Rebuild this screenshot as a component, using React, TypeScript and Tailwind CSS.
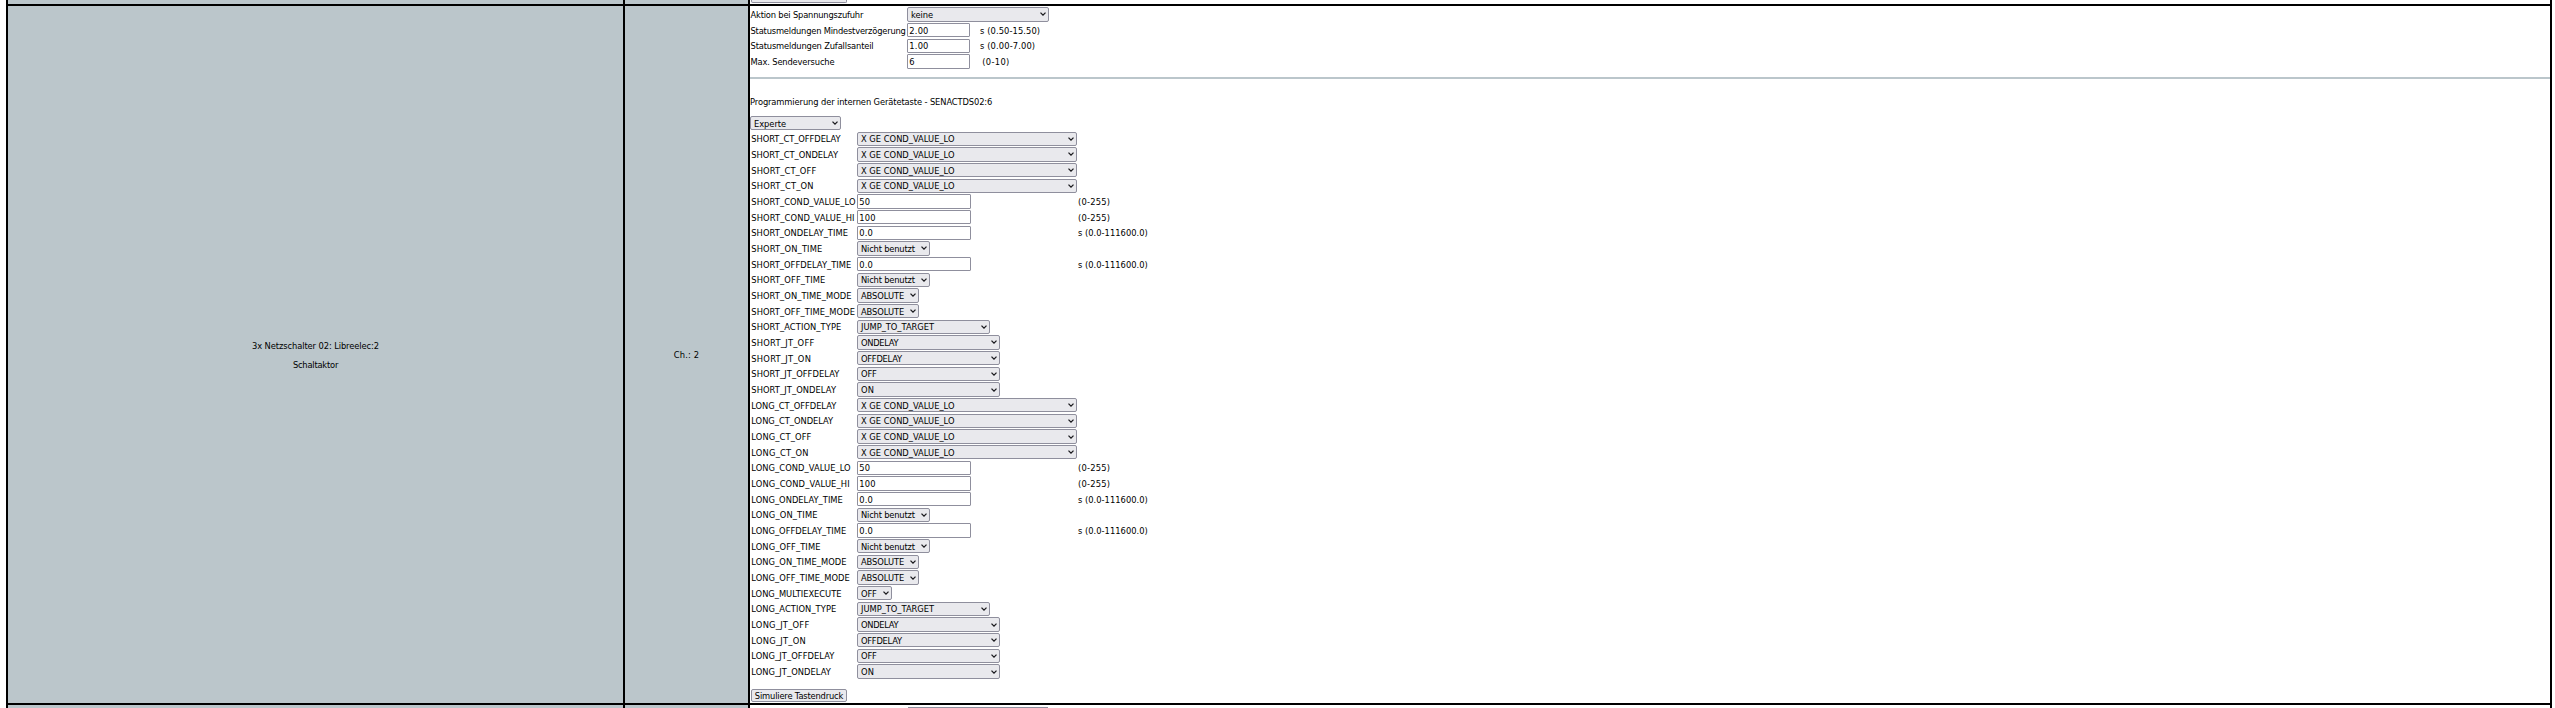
import type { ReactNode } from 'react';

type Field = {
  label: string;
  track: string;
  kind: 'select' | 'input';
  value: string;
  range?: string;
};

const COND = 'X GE COND_VALUE_LO';

const FIELDS: Field[] = [
  { label: 'SHORT_CT_OFFDELAY', track: 'tracking-[-0.063px]', kind: 'select', value: COND },
  { label: 'SHORT_CT_ONDELAY', track: 'tracking-[-0.024px]', kind: 'select', value: COND },
  { label: 'SHORT_CT_OFF', track: 'tracking-[0.108px]', kind: 'select', value: COND },
  { label: 'SHORT_CT_ON', track: 'tracking-[0.189px]', kind: 'select', value: COND },
  { label: 'SHORT_COND_VALUE_LO', track: 'tracking-[0.051px]', kind: 'input', value: '50', range: '(0-255)' },
  { label: 'SHORT_COND_VALUE_HI', track: 'tracking-[0.122px]', kind: 'input', value: '100', range: '(0-255)' },
  { label: 'SHORT_ONDELAY_TIME', track: 'tracking-[0.032px]', kind: 'input', value: '0.0', range: 's (0.0-111600.0)' },
  { label: 'SHORT_ON_TIME', track: 'tracking-[0.125px]', kind: 'select', value: 'Nicht benutzt' },
  { label: 'SHORT_OFFDELAY_TIME', track: 'tracking-[0.027px]', kind: 'input', value: '0.0', range: 's (0.0-111600.0)' },
  { label: 'SHORT_OFF_TIME', track: 'tracking-[0.088px]', kind: 'select', value: 'Nicht benutzt' },
  { label: 'SHORT_ON_TIME_MODE', track: 'tracking-[0.071px]', kind: 'select', value: 'ABSOLUTE' },
  { label: 'SHORT_OFF_TIME_MODE', track: 'tracking-[0.069px]', kind: 'select', value: 'ABSOLUTE' },
  { label: 'SHORT_ACTION_TYPE', track: 'tracking-[0.069px]', kind: 'select', value: 'JUMP_TO_TARGET' },
  { label: 'SHORT_JT_OFF', track: 'tracking-[0.231px]', kind: 'select', value: 'ONDELAY' },
  { label: 'SHORT_JT_ON', track: 'tracking-[0.256px]', kind: 'select', value: 'OFFDELAY' },
  { label: 'SHORT_JT_OFFDELAY', track: 'tracking-[0.066px]', kind: 'select', value: 'OFF' },
  { label: 'SHORT_JT_ONDELAY', track: 'tracking-[0.067px]', kind: 'select', value: 'ON' },
  { label: 'LONG_CT_OFFDELAY', track: 'tracking-[-0.044px]', kind: 'select', value: COND },
  { label: 'LONG_CT_ONDELAY', track: 'tracking-[-0.024px]', kind: 'select', value: COND },
  { label: 'LONG_CT_OFF', track: 'tracking-[0.108px]', kind: 'select', value: COND },
  { label: 'LONG_CT_ON', track: 'tracking-[0.189px]', kind: 'select', value: COND },
  { label: 'LONG_COND_VALUE_LO', track: 'tracking-[0.056px]', kind: 'input', value: '50', range: '(0-255)' },
  { label: 'LONG_COND_VALUE_HI', track: 'tracking-[0.122px]', kind: 'input', value: '100', range: '(0-255)' },
  { label: 'LONG_ONDELAY_TIME', track: 'tracking-[0.011px]', kind: 'input', value: '0.0', range: 's (0.0-111600.0)' },
  { label: 'LONG_ON_TIME', track: 'tracking-[0.14px]', kind: 'select', value: 'Nicht benutzt' },
  { label: 'LONG_OFFDELAY_TIME', track: 'tracking-[0.015px]', kind: 'input', value: '0.0', range: 's (0.0-111600.0)' },
  { label: 'LONG_OFF_TIME', track: 'tracking-[0.09px]', kind: 'select', value: 'Nicht benutzt' },
  { label: 'LONG_ON_TIME_MODE', track: 'tracking-[0.06px]', kind: 'select', value: 'ABSOLUTE' },
  { label: 'LONG_OFF_TIME_MODE', track: 'tracking-[0.053px]', kind: 'select', value: 'ABSOLUTE' },
  { label: 'LONG_MULTIEXECUTE', track: 'tracking-[-0.021px]', kind: 'select', value: 'OFF' },
  { label: 'LONG_ACTION_TYPE', track: 'tracking-[0.06px]', kind: 'select', value: 'JUMP_TO_TARGET' },
  { label: 'LONG_JT_OFF', track: 'tracking-[0.229px]', kind: 'select', value: 'ONDELAY' },
  { label: 'LONG_JT_ON', track: 'tracking-[0.25px]', kind: 'select', value: 'OFFDELAY' },
  { label: 'LONG_JT_OFFDELAY', track: 'tracking-[0.055px]', kind: 'select', value: 'OFF' },
  { label: 'LONG_JT_ONDELAY', track: 'tracking-[0.053px]', kind: 'select', value: 'ON' },
];

const SELECT_STYLE: Record<string, string> = {
  [COND]: 'w-[220px] tracking-[0.006px]',
  'Nicht benutzt': 'w-[73px] tracking-[-0.19px]',
  ABSOLUTE: 'w-[62px] tracking-[-0.084px]',
  JUMP_TO_TARGET: 'w-[133px] tracking-[-0.029px]',
  ONDELAY: 'w-[143px] tracking-[-0.3px]',
  OFFDELAY: 'w-[143px] tracking-[-0.25px]',
  OFF: 'w-[143px] tracking-[-0.134px]',
  ON: 'w-[143px] tracking-[0.3px]',
};

const RANGE_TRACK: Record<string, string> = {
  '(0-255)': 'tracking-[0.22px]',
  's (0.0-111600.0)': 'tracking-[0.018px]',
};

function Select({ children, className }: { children: ReactNode; className: string }) {
  return (
    <div className={`flex shrink-0 items-center justify-between rounded-[2px] border border-[#8f8f9d] bg-[#e9e9ed] pt-px pr-[2.5px] pl-[3px] ${className}`}>
      <span>{children}</span>
      <svg className="mb-px h-[4px] w-[6px]" viewBox="0 0 6 4" fill="none" stroke="#1a1a1e" strokeWidth="1.3">
        <path d="M0.5 0.6 L3 3.1 L5.5 0.6" />
      </svg>
    </div>
  );
}

function Input({ children, className }: { children: ReactNode; className: string }) {
  return (
    <div className={`flex h-[14.333px] shrink-0 items-center rounded-[1px] border border-[#8f8f9d] bg-white pt-px pl-[1.3px] ${className}`}>
      {children}
    </div>
  );
}

function TopRow({ label, track, children }: { label: string; track: string; children: ReactNode }) {
  return (
    <div className="flex h-[15.672px] items-start">
      <div className={`flex h-[14.333px] w-[157px] shrink-0 items-center pt-px pl-[0.5px] ${track}`}>{label}</div>
      {children}
    </div>
  );
}

function Range({ children, className }: { children: ReactNode; className: string }) {
  return <div className={`flex h-[14.333px] items-center pt-px ${className}`}>{children}</div>;
}

function FieldRow({ field }: { field: Field }) {
  const multi = field.label === 'LONG_MULTIEXECUTE';
  return (
    <div className="flex h-[15.672px] items-start">
      <div className={`flex h-[14.333px] w-[107px] shrink-0 items-center pt-px pl-[1.3px] ${field.track}`}>{field.label}</div>
      <div className="flex w-[221px] shrink-0">
        {field.kind === 'input' ? (
          <Input className="w-[114px] tracking-[0.15px]">{field.value}</Input>
        ) : (
          <Select className={`h-[14.333px] ${multi ? 'w-[35px] tracking-[-0.134px]' : SELECT_STYLE[field.value]}`}>{field.value}</Select>
        )}
      </div>
      {field.range && <Range className={RANGE_TRACK[field.range]}>{field.range}</Range>}
    </div>
  );
}

export default function App() {
  return (
    <div className="h-[708px] w-[2555px] overflow-hidden bg-white pl-[6px] font-['DejaVu_Sans',sans-serif] text-[8.333px] leading-[10px] whitespace-nowrap text-black">
      <div className="grid h-[708px] w-[2546px] grid-cols-[615px_123px_1800px] grid-rows-[4px_697px_3px] gap-[2px] border-x-2 border-black bg-black">
        <div className="bg-[#bbc6cb]" />
        <div className="bg-[#bbc6cb]" />
        <div className="bg-white pl-[1px]">
          <div className="h-[3px] w-[96px] rounded-b-[2px] border border-t-0 border-[#8f8f9d] bg-[#e9e9ed]" />
        </div>

        <div className="flex flex-col items-center gap-[9px] bg-[#bbc6cb] pt-[335px]">
          <div className="tracking-[-0.094px]">3x Netzschalter 02: Libreelec:2</div>
          <div className="tracking-[-0.21px]">Schaltaktor</div>
        </div>
        <div className="flex flex-col items-center bg-[#bbc6cb] pt-[344px]">
          <div className="tracking-[0.2px]">Ch.: 2</div>
        </div>
        <div className="flex flex-col bg-white pt-[1.333px]">
          <TopRow label="Aktion bei Spannungszufuhr" track="tracking-[-0.184px]">
            <Select className="h-[14.333px] w-[142px] tracking-[-0.063px]">keine</Select>
          </TopRow>
          <TopRow label="Statusmeldungen Mindestverzögerung" track="tracking-[-0.19px]">
            <Input className="w-[63px] tracking-[0.194px]">2.00</Input>
            <Range className="pl-[10px] tracking-[0.09px]">s (0.50-15.50)</Range>
          </TopRow>
          <TopRow label="Statusmeldungen Zufallsanteil" track="tracking-[-0.16px]">
            <Input className="w-[63px] tracking-[0.194px]">1.00</Input>
            <Range className="pl-[10px] tracking-[0.123px]">s (0.00-7.00)</Range>
          </TopRow>
          <TopRow label="Max. Sendeversuche" track="tracking-[-0.153px]">
            <Input className="w-[63px]">6</Input>
            <Range className="pl-[12.3px] tracking-[0.324px]">(0-10)</Range>
          </TopRow>
          <div className="mt-[7px] h-[2px] shrink-0 bg-[#bbc6cb]" />
          <div className="mt-[18px] tracking-[-0.11px]">Programmierung der internen Gerätetaste - SENACTDS02:6</div>
          <Select className="mt-[9.333px] h-[14px] w-[91px] tracking-[-0.051px]">Experte</Select>
          <div className="mt-[1.25px] flex flex-col">
            {FIELDS.map((field) => (
              <FieldRow key={field.label} field={field} />
            ))}
          </div>
          <button className="mt-[9.25px] ml-[1px] flex h-[12.667px] w-[96px] shrink-0 items-start justify-center rounded-[2px] border border-[#8f8f9d] bg-[#e9e9ed] pt-[0.667px] tracking-[-0.176px]">
            Simuliere Tastendruck
          </button>
        </div>

        <div className="bg-[#bbc6cb]" />
        <div className="bg-[#bbc6cb]" />
        <div className="bg-white pt-[2px] pl-[157px]">
          <div className="h-px w-[142px] px-px">
            <div className="h-px bg-[#8f8f9d]" />
          </div>
        </div>
      </div>
    </div>
  );
}
